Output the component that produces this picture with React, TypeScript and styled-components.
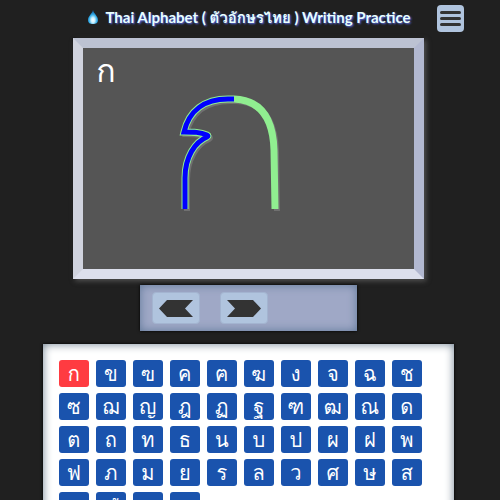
import React, { useState } from "react";
import styled, { createGlobalStyle } from "styled-components";

const GlobalStyle = createGlobalStyle`
  *, *::before, *::after { box-sizing: border-box; }
  html { scrollbar-width: none; }
  body {
    margin: 0;
    background: #202020;
    font-family: "Noto Sans", "Loma", "Garuda", "Waree", "Noto Sans Thai Looped", "Noto Sans Thai", sans-serif;
  }
  button { font: inherit; cursor: pointer; }
`;

const Page = styled.main`
  display: flex;
  flex-direction: column;
  align-items: center;
  padding: 0 3px 0 0;
`;

const Header = styled.header`
  display: grid;
  grid-template-columns: 1fr auto 1fr;
  align-items: center;
  gap: 26px;
  width: 100%;
  height: 37px;
  margin-bottom: 1px;
`;

const TitleGroup = styled.div`
  grid-column: 2;
  display: flex;
  align-items: center;
  gap: 5px;
  padding-bottom: 4px;
`;

const Title = styled.h1`
  margin: 0;
  font-family: Lato, "Loma", "Garuda", "Waree", "Noto Sans Thai Looped", "Noto Sans Thai", sans-serif;
  font-size: 15px;
  line-height: 20px;
  font-weight: 700;
  white-space: nowrap;
  color: #e8ffff;
  text-shadow: 1px 1px 2px #5a6ef0;
`;

const MenuButton = styled.button`
  justify-self: start;
  display: grid;
  place-items: center;
  width: 27px;
  height: 27px;
  padding: 0;
  border: 0;
  border-radius: 4px;
  background: #b0c4de;
`;

const Board = styled.section`
  display: grid;
  width: 70.5%;
  min-height: 241px;
  border: 10px solid;
  border-color: #bcc2d2 #b2b8d0 #dcdfec #d0d3de;
  background: #555;
  box-shadow: 2px 2px 5px #555, 0 0 2px #000;
`;

const Sample = styled.div`
  grid-area: 1 / 1;
  padding: 6px 13px;
  font-size: 32px;
  line-height: 32px;
  color: #fff;
`;

const Drawing = styled.svg`
  grid-area: 1 / 1;
  justify-self: center;
  width: 140px;
  height: 180px;
  margin-right: 38px;
`;

const Toolbar = styled.nav`
  display: flex;
  gap: 20px;
  width: 217px;
  margin-top: 6px;
  padding: 7px 12px;
  background: #9fa8c6;
  box-shadow: inset 0 0 10px #607898, 0 0 3px #000;
`;

const StepButton = styled.button`
  display: grid;
  place-items: center;
  width: 48px;
  height: 32px;
  padding: 0;
  border: 1px solid #a3b4d0;
  border-radius: 4px;
  background: #b0c4de;
`;

const LetterPanel = styled.section`
  display: flex;
  flex-wrap: wrap;
  gap: 6px 7px;
  width: calc(83% - 1px);
  margin-top: 13px;
  padding: 16px;
  background: #fff;
  box-shadow: inset 0 0 10px #708090, 0 0 3px #000;
`;

const LetterButton = styled.button<{ $active: boolean }>`
  width: 30px;
  height: 27px;
  padding: 0;
  border: 0;
  border-radius: 3px;
  font-size: 20px;
  font-weight: 500;
  line-height: 27px;
  color: #fff;
  background: ${(p) => (p.$active ? "#ff3b41" : "#1a53ad")};
`;

const letters = [..."กขฃคฅฆงจฉชซฌญฎฏฐฑฒณดตถทธนบปผฝพฟภมยรลวศษสหฬอฮ"];

const firstHalf =
  "M25 129 L25 98 C25 77 35 62 47 57 Q49 56 47 55 C40 52 34 52 24 52 C29 31 44 19 68 19 L74 19";
const strokePath = `${firstHalf} C98 20 113 35 114 70 L115 129`;

export default function App() {
  const [index, setIndex] = useState(0);
  const step = (by: number) =>
    setIndex((i) => (i + by + letters.length) % letters.length);

  return (
    <>
      <GlobalStyle />
      <Page>
        <Header>
          <TitleGroup>
            <svg width="14" height="16" viewBox="0 0 14 16" aria-hidden="true">
              <defs>
                <radialGradient id="drop" cx="50%" cy="72%" r="60%">
                  <stop offset="0" stopColor="#fff" />
                  <stop offset="0.3" stopColor="#c9f0ff" />
                  <stop offset="0.65" stopColor="#35aee8" />
                  <stop offset="1" stopColor="#1267a8" />
                </radialGradient>
              </defs>
              <path
                d="M7 1 C8 5 12 7 12 11 C12 14 10 15 7 15 C4 15 2 14 2 11 C2 7 6 5 7 1Z"
                fill="url(#drop)"
              />
            </svg>
            <Title>Thai Alphabet ( ตัวอักษรไทย ) Writing Practice</Title>
          </TitleGroup>
          <MenuButton aria-label="Menu">
            <svg width="23" height="17" viewBox="0 0 23 17" aria-hidden="true">
              <path
                d="M2.5 2.5H20.5M2.5 8.5H20.5M2.5 14.5H20.5"
                stroke="#333"
                strokeWidth="3"
                strokeLinecap="round"
              />
            </svg>
          </MenuButton>
        </Header>

        <Board aria-label="Writing board">
          <Sample>{letters[index]}</Sample>
          <Drawing viewBox="0 0 140 180" aria-hidden="true">
            <g transform="translate(0 32)" fill="none">
              <path
                d={strokePath}
                transform="translate(2 2)"
                stroke="#707070"
                strokeWidth="6"
              />
              <path d={strokePath} stroke="#90ee90" strokeWidth="7" />
              <path d={firstHalf} stroke="#00f" strokeWidth="5" />
            </g>
          </Drawing>
        </Board>

        <Toolbar aria-label="Letter navigation">
          <StepButton aria-label="Previous letter" onClick={() => step(-1)}>
            <svg width="34" height="17" viewBox="0 0 34 17" aria-hidden="true">
              <path d="M0 8.5 L8 0 H34 L26 8.5 L34 17 H8Z" fill="#333" />
            </svg>
          </StepButton>
          <StepButton aria-label="Next letter" onClick={() => step(1)}>
            <svg width="34" height="17" viewBox="0 0 34 17" aria-hidden="true">
              <path d="M34 8.5 L26 0 H0 L8 8.5 L0 17 H26Z" fill="#333" />
            </svg>
          </StepButton>
        </Toolbar>

        <LetterPanel aria-label="Letters">
          {letters.map((letter, i) => (
            <LetterButton
              key={letter}
              $active={i === index}
              aria-pressed={i === index}
              onClick={() => setIndex(i)}
            >
              {letter}
            </LetterButton>
          ))}
        </LetterPanel>
      </Page>
    </>
  );
}
